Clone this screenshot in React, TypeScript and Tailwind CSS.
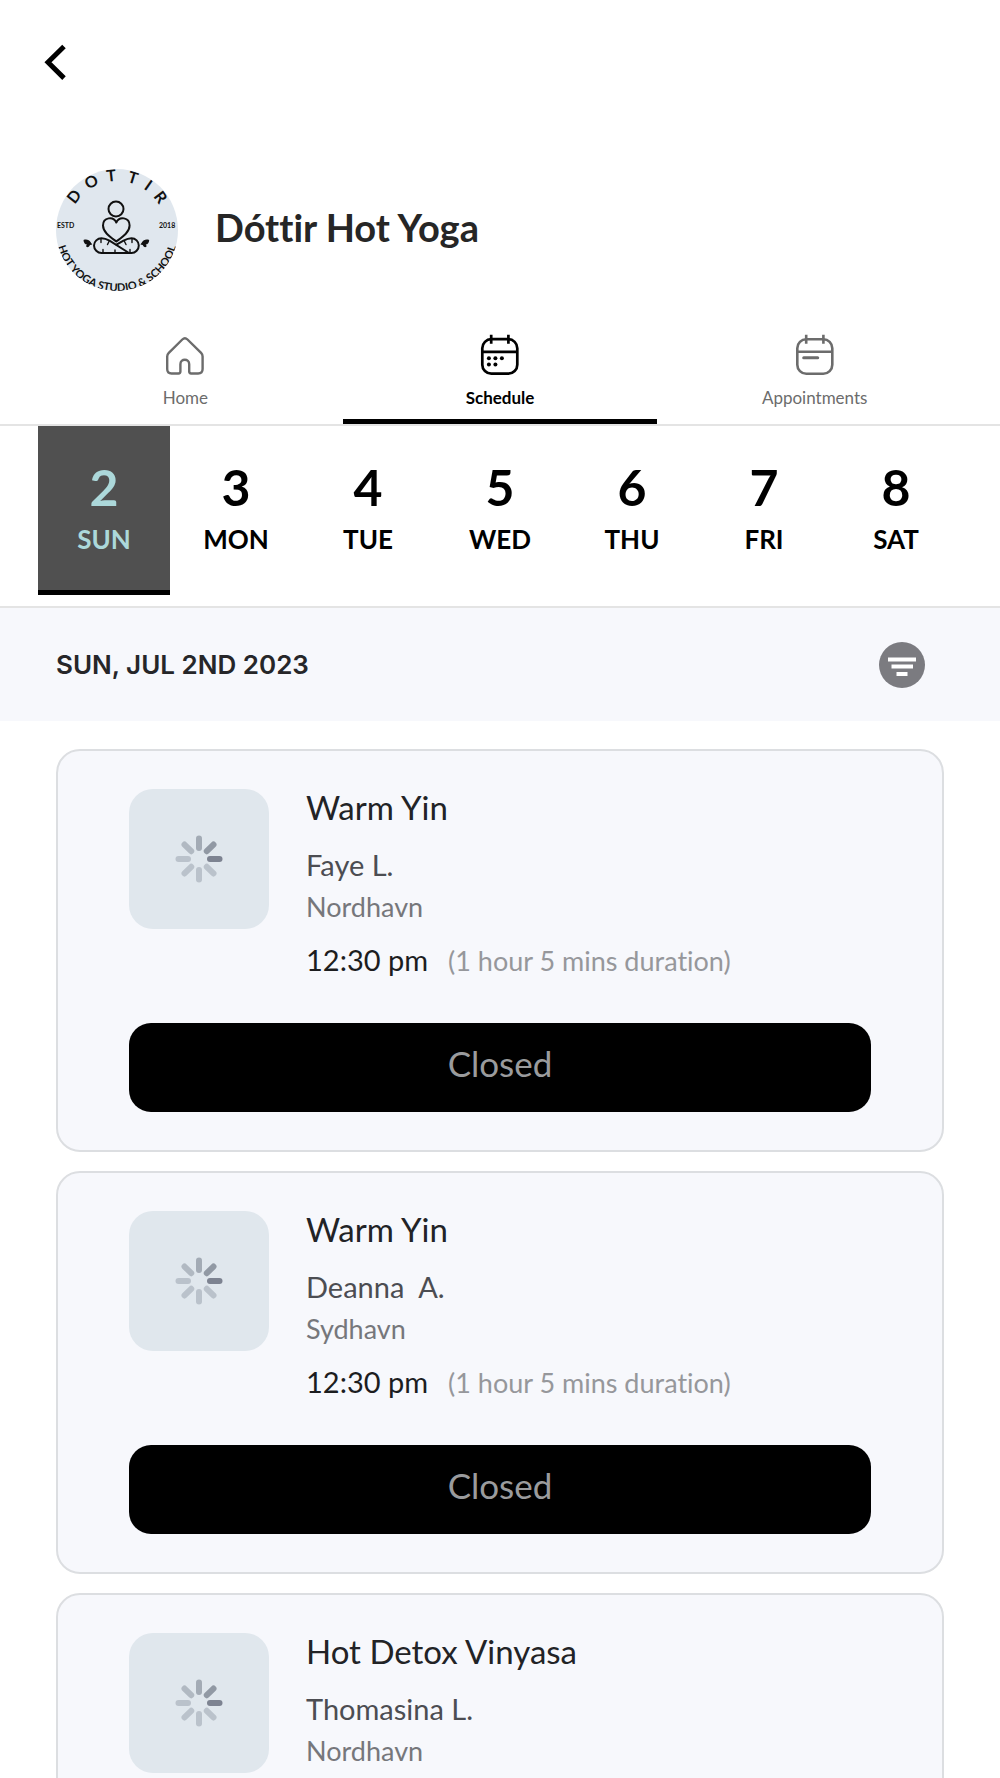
import { useState } from "react";
import clsx from "clsx";

interface YogaClass {
  id: number;
  name: string;
  teacher: string;
  location: string;
  time: string;
  duration: string;
}

const days = [
  { date: 2, label: "SUN" },
  { date: 3, label: "MON" },
  { date: 4, label: "TUE" },
  { date: 5, label: "WED" },
  { date: 6, label: "THU" },
  { date: 7, label: "FRI" },
  { date: 8, label: "SAT" },
];

const classes: YogaClass[] = [
  { id: 1, name: "Warm Yin", teacher: "Faye L.", location: "Nordhavn", time: "12:30 pm", duration: "(1 hour 5 mins duration)" },
  { id: 2, name: "Warm Yin", teacher: "Deanna  A.", location: "Sydhavn", time: "12:30 pm", duration: "(1 hour 5 mins duration)" },
  { id: 3, name: "Hot Detox Vinyasa", teacher: "Thomasina L.", location: "Nordhavn", time: "12:30 pm", duration: "(1 hour 5 mins duration)" },
];

const tabs = [
  { id: "home", label: "Home", Icon: HomeIcon },
  { id: "schedule", label: "Schedule", Icon: ScheduleIcon },
  { id: "appointments", label: "Appointments", Icon: AppointmentsIcon },
];

// Letters of the studio name and their angle on the badge
const badgeLetters = [
  { char: "D", angle: -52 },
  { char: "O", angle: -28 },
  { char: "T", angle: -6 },
  { char: "T", angle: 17 },
  { char: "I", angle: 35 },
  { char: "R", angle: 53 },
];

function StudioLogo() {
  return (
    <svg viewBox="0 0 122 122" className="size-[122px] shrink-0 rounded-full bg-[#e0e7ee]" role="img" aria-label="Dottir Hot Yoga logo">
      <g fill="#111" fontFamily="Lato, sans-serif" fontWeight="700">
        {badgeLetters.map(({ char, angle }, index) => (
          <text key={index} x="61" y="12" fontSize="16" textAnchor="middle" transform={`rotate(${angle} 61 61)`}>
            {char}
          </text>
        ))}
        <text x="1" y="59" fontSize="7">ESTD</text>
        <text x="103" y="59" fontSize="7">2018</text>
        <path id="badge-arc" d="M-0.5 61a61.5 61.5 0 0 0 123 0" fill="none" />
        <text fontSize="11" textAnchor="middle">
          <textPath href="#badge-arc" startOffset="50%">HOT YOGA STUDIO &amp; SCHOOL</textPath>
        </text>
      </g>
      <g fill="none" stroke="#111" strokeWidth="2" strokeLinecap="round" strokeLinejoin="round">
        <circle cx="60" cy="40" r="7.5" />
        <path d="M60.3 72.5C55 68.500 47 63.500 47 56.500c0-8.500 10.500-9.500 13.300-3 2.800-6.500 13.300-5.500 13.300 3 0 7-8 12-13.300 16z" />
        <path d="M73 84H45.500c-4 0-7.500-3.500-7.500-7.500s3.500-7.300 7.500-7.300c3 0 5 .8 8 2.500z" />
        <path d="M73 84h2.500c4 0 7.300-3.500 7.300-7.500s-3.300-7.300-7.300-7.300c-3 0-5 .8-8 2.500l-7 4" />
        <path d="M45 70v3.500M53 72.500l-1.500 3M47 84v-3.500M59 84v-3M76 70v3.500M68.500 72.500l1.500 3M74 80.500v3" strokeWidth="1.400" />
      </g>
      <path d="M27.500 71c3-1 6 0 7 2l1.800 2.500-2.300.5c-1.500 3-3.500 2.500-4 1l1-1.500c-2 0-3.500-2-3.500-4.500zM93.200 71c-3-1-6 0-7 2l-1.800 2.500 2.300.5c1.500 3 3.500 2.500 4 1l-1-1.500c2 0 3.500-2 3.500-4.500z" fill="#111" />
    </svg>
  );
}

function HomeIcon() {
  return (
    <svg viewBox="0 0 40 42" className="h-[42px] w-10" fill="none" stroke="currentColor" strokeWidth="2.400" strokeLinejoin="round">
      <path d="M6.500 39.500h7c1.200 0 1.900-.7 1.900-1.900v-7.400c0-6 8.800-6 8.800 0v7.400c0 1.200.7 1.900 1.900 1.900h7c3 0 4.500-1.500 4.500-4.500V22.500c0-1.600-.5-2.700-1.500-3.700L22.500 5.500c-1.700-1.600-3.500-1.600-5.200 0L3.800 18.800c-1 1-1.600 2.100-1.600 3.700V35c0 3 1.400 4.500 4.300 4.500z" />
    </svg>
  );
}

function CalendarFrame() {
  return (
    <>
      <rect x="2.300" y="5.200" width="35" height="34.500" rx="9" />
      <path d="M2.300 17.800h35M11.200 .8v9M28.400 .8v9" />
    </>
  );
}

function ScheduleIcon() {
  return (
    <svg viewBox="0 0 40 42" className="h-[42px] w-10" fill="none" stroke="currentColor" strokeWidth="2.700">
      <CalendarFrame />
      <g fill="currentColor" stroke="none">
        <circle cx="8.900" cy="24.200" r="2" />
        <circle cx="15.400" cy="24.200" r="2" />
        <circle cx="21.900" cy="24.200" r="2" />
        <circle cx="8.900" cy="30.500" r="2" />
        <circle cx="15.400" cy="30.500" r="2" />
      </g>
    </svg>
  );
}

function AppointmentsIcon() {
  return (
    <svg viewBox="0 0 40 42" className="h-[42px] w-10" fill="none" stroke="currentColor" strokeWidth="2.600">
      <CalendarFrame />
      <path d="M8.700 23.800h14" strokeLinecap="round" strokeWidth="3" />
    </svg>
  );
}

function FilterIcon() {
  return (
    <svg viewBox="0 0 46 46" className="size-[46px]">
      <circle cx="23" cy="23" r="23" fill="#7b7b80" />
      <path d="M9 15.500h28v4H9zM12.500 22.500h21.500v4H12.500zM17.500 30h11v4h-11z" fill="#fff" />
    </svg>
  );
}

function Spinner() {
  const spokes = ["#7d8391", "#bac2cb", "#bac2cb", "#bac2cb", "#bac2cb", "#b1b9c2", "#a3abb5", "#9199a4"];

  return (
    <svg viewBox="0 0 48 48" className="size-12" strokeWidth="6" strokeLinecap="round">
      {spokes.map((color, index) => (
        <path key={index} d="M35 24h9.500" stroke={color} transform={`rotate(${index * 45} 24 24)`} />
      ))}
    </svg>
  );
}

function ClassCard({ item }: { item: YogaClass }) {
  return (
    <article className="rounded-3xl border-2 border-[#dcdee1] bg-[#f7f8fc] px-[71px] py-[38px]">
      <div className="flex gap-[37px]">
        <div className="flex size-[140px] shrink-0 items-center justify-center rounded-3xl bg-[#e0e7ed]">
          <Spinner />
        </div>
        <div className="min-w-0">
          <h2 className="text-[33px] leading-9 text-[#222326]">{item.name}</h2>
          <p className="mt-[22px] text-[29px] leading-9 whitespace-pre text-[#4c4d52]">{item.teacher}</p>
          <p className="mt-1.5 text-[27px] leading-9 text-[#76777b]">{item.location}</p>
          <p className="mt-[17px] flex items-baseline gap-5 leading-9">
            <span className="text-[29px] text-[#1c1d1f]">{item.time}</span>
            <span className="text-[27px] text-[#96979b]">{item.duration}</span>
          </p>
        </div>
      </div>
      <button type="button" className="mt-11 h-[89px] w-full rounded-[22px] bg-black pb-2 text-[35px] text-[#9a9b9d]">
        Closed
      </button>
    </article>
  );
}

export default function App() {
  const [activeTab, setActiveTab] = useState("schedule");
  const [activeDay, setActiveDay] = useState(2);

  return (
    <div className="min-h-screen bg-white font-['Lato',sans-serif] text-black [font-variant-ligatures:none]">
      <header>
        <div className="px-10 pt-10">
          <button type="button" aria-label="Back" className="block">
            <svg viewBox="0 0 32 45" className="h-[45px] w-8" fill="none" stroke="currentColor" strokeWidth="5">
              <path d="M24 6.500L8 22.300l16 15.800" />
            </svg>
          </button>
        </div>
        <div className="mt-[84px] flex items-center gap-[37px] px-14">
          <StudioLogo />
          <h1 className="pb-1.5 text-[38px] leading-[46px] font-bold text-[#262626]">Dóttir Hot Yoga</h1>
        </div>
        <nav className="mt-[43px] flex border-b-2 border-[#e4e4e4] px-7">
          {tabs.map(({ id, label, Icon }) => (
            <button
              key={id}
              type="button"
              onClick={() => setActiveTab(id)}
              className={clsx(
                "flex flex-1 flex-col items-center border-b-5 pb-[9px]",
                activeTab === id ? "border-black font-bold text-black" : "border-transparent text-[#6c6c6c]"
              )}
            >
              <Icon />
              <span className="mt-2.5 text-[17px] leading-6">{label}</span>
            </button>
          ))}
        </nav>
      </header>

      <div className="flex border-b-2 border-[#e4e4e4] px-[38px] pb-[11px]">
        {days.map((day) => (
          <button
            key={day.date}
            type="button"
            onClick={() => setActiveDay(day.date)}
            className={clsx(
              "flex flex-1 flex-col items-center border-b-5 pt-8 pb-[31px] font-bold",
              activeDay === day.date ? "border-black bg-[#505050] text-[#acd8da]" : "border-transparent"
            )}
          >
            <span className="text-[50px] leading-[58px]">{day.date}</span>
            <span className="mt-[3px] text-[26px] leading-10">{day.label}</span>
          </button>
        ))}
      </div>

      <div className="flex h-[113px] items-center justify-between bg-[#f7f8fc] pr-[75px] pl-14">
        <p className="font-['Inter',sans-serif] text-[26px] font-semibold text-[#262629]">SUN, JUL 2ND 2023</p>
        <button type="button" aria-label="Filter classes">
          <FilterIcon />
        </button>
      </div>

      <main className="flex flex-col gap-[19px] px-14 pt-7">
        {classes.map((item) => (
          <ClassCard key={item.id} item={item} />
        ))}
      </main>
    </div>
  );
}
